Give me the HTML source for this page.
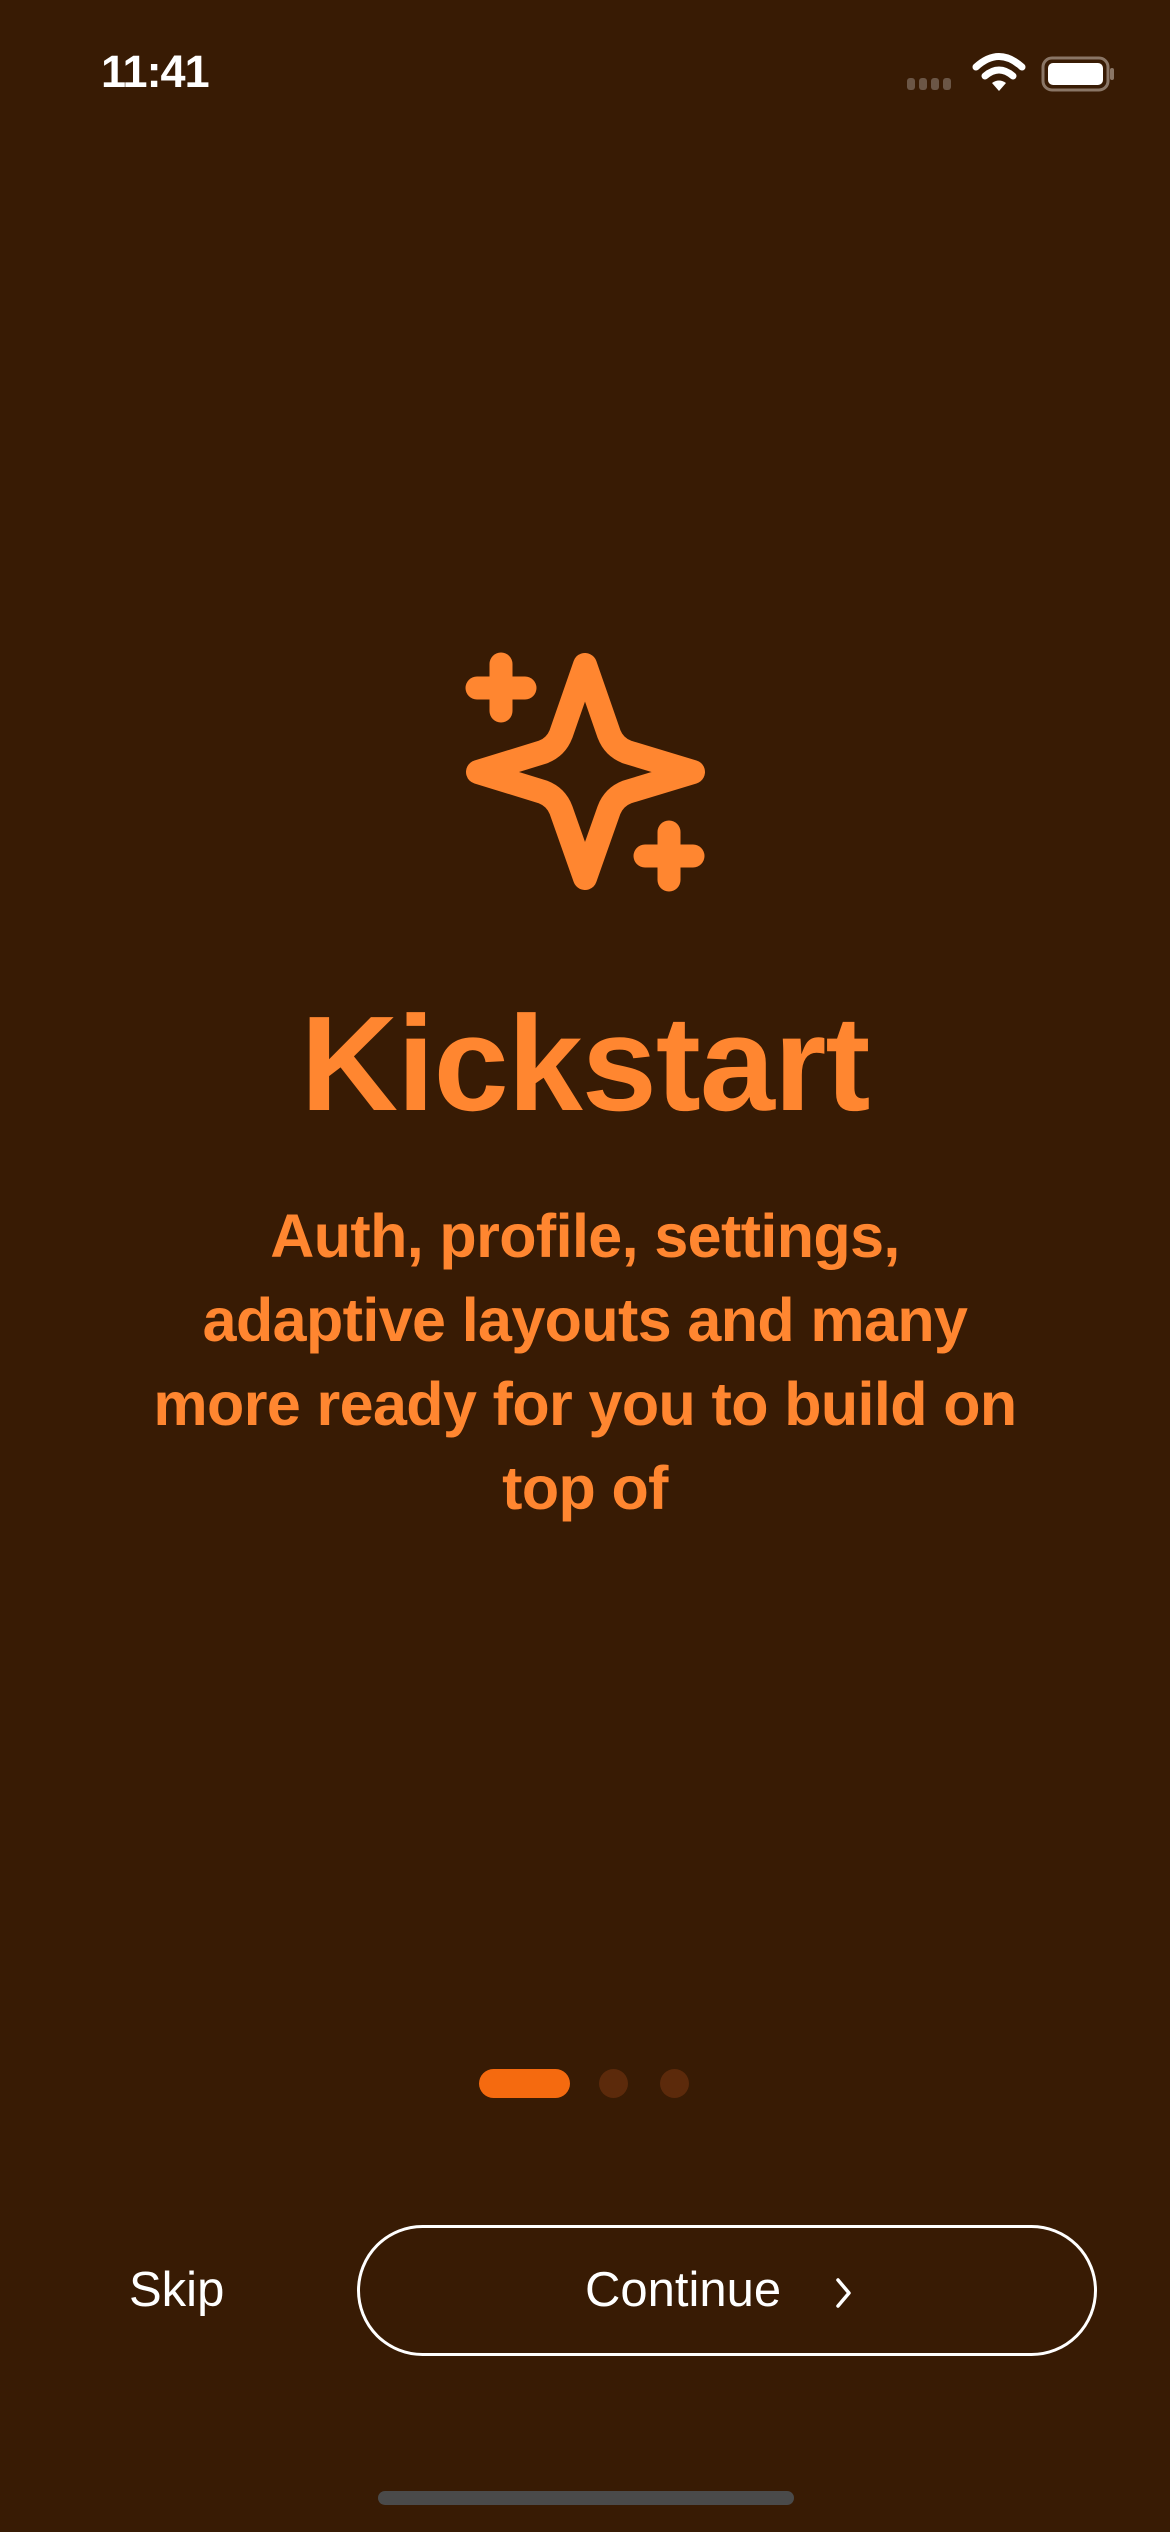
<!DOCTYPE html>
<html><head><meta charset="utf-8"><style>
*{margin:0;padding:0;box-sizing:border-box}
html,body{width:1170px;height:2532px;background:#381B04;overflow:hidden;font-family:"Liberation Sans",sans-serif}
.abs{position:absolute}
.time{left:101px;top:46px;font-size:45px;font-weight:600;color:#fff;letter-spacing:-1px}
.title{left:0;width:1170px;top:986px;text-align:center;color:#FF8630;font-size:135px;font-weight:700;letter-spacing:-1px}
.sub{left:0;width:1170px;top:1194px;text-align:center;color:#FF8630;font-size:61px;font-weight:700;line-height:84px;letter-spacing:-0.6px}
.pill{left:479px;top:2069px;width:91px;height:29px;border-radius:15px;background:#F56A0F}
.dot{top:2069px;width:29px;height:29px;border-radius:50%;background:#5C2A0B}
.btn{left:357px;top:2225px;width:740px;height:131px;border:3px solid #fff;border-radius:66px}
.ct{left:585px;top:2262px;font-size:49px;color:#fff}
.skip{left:129px;top:2262px;font-size:49px;color:#fff}
.home{left:378px;top:2491px;width:416px;height:14px;border-radius:7px;background:#4A4A4A}
</style></head><body>
<div class="abs time">11:41</div>
<svg class="abs" style="left:900px;top:50px" width="220" height="50" viewBox="900 50 220 50">
<g fill="#6b5646"><rect x="907" y="78" width="8" height="12" rx="3"/><rect x="919" y="78" width="8" height="12" rx="3"/><rect x="931" y="78" width="8" height="12" rx="3"/><rect x="943" y="78" width="8" height="12" rx="3"/></g>
<g fill="none" stroke="#fff" stroke-width="7" stroke-linecap="round"><path d="M976 67 Q999 46 1022 67"/><path d="M985 76 Q999 64 1013 76"/></g>
<path d="M992 83 L999 91 L1006 83 Q999 78 992 83Z" fill="#fff"/>
<rect x="1043" y="58" width="65" height="32" rx="9" fill="none" stroke="#8a7666" stroke-width="3"/>
<rect x="1048" y="63" width="55" height="22" rx="5" fill="#fff"/>
<rect x="1110" y="68" width="4" height="12" rx="2" fill="#8a7666"/>
</svg>
<svg class="abs" style="left:440px;top:620px" width="300" height="290" viewBox="440 620 300 290">
<path d="M585,665 L561,734 Q556,747 543,752 L478,772 L543,792 Q556,797 561,810 L585,878 L609,810 Q614,797 627,792 L693,772 L627,752 Q614,747 609,734 Z" fill="none" stroke="#FF8630" stroke-width="24" stroke-linejoin="round"/>
<g stroke="#FF8630" stroke-width="23" stroke-linecap="round"><path d="M501,664 V711 M477,688 H525"/><path d="M669,832 V880 M645,856 H693"/></g>
</svg>
<div class="abs title">Kickstart</div>
<div class="abs sub">Auth, profile, settings,<br>adaptive layouts and many<br>more ready for you to build on<br>top of</div>
<div class="abs pill"></div>
<div class="abs dot" style="left:599px"></div>
<div class="abs dot" style="left:660px"></div>
<div class="abs skip">Skip</div>
<div class="abs btn"></div>
<div class="abs ct">Continue</div>
<svg class="abs" style="left:832px;top:2276px" width="24" height="34" viewBox="0 0 24 34"><path d="M6 4 L17 17 L6 30" fill="none" stroke="#fff" stroke-width="3.5" stroke-linecap="round" stroke-linejoin="round"/></svg>
<div class="abs home"></div>
</body></html>
